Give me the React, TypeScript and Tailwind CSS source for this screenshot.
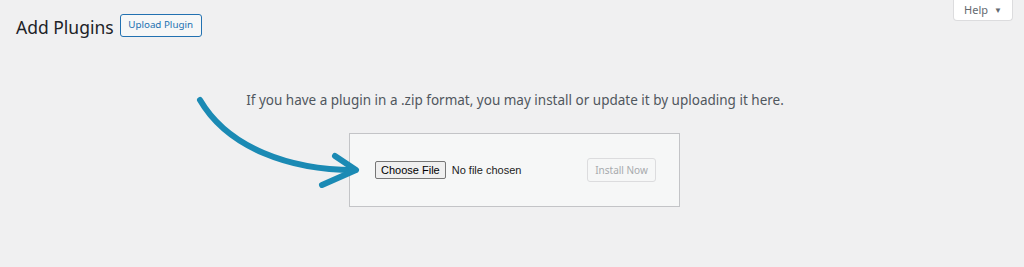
import React from "react";

export default function App() {
  return (
    <div className="relative w-full h-[267px] bg-[#f0f0f1] overflow-hidden" style={{ fontFamily: '"Noto Sans", "Open Sans", sans-serif' }}>
      <div className="absolute top-0 right-[11px] flex items-center justify-center gap-[6px] w-[60px] h-[21px] bg-white border border-t-0 border-[#dcdcde] rounded-b-[4px] text-[11px] text-[#646970]">
        <span>Help</span>
        <span className="text-[8px] leading-none">▼</span>
      </div>

      <div className="flex items-start pt-[14px] pl-[16px] gap-[6px]">
        <h1 className="mt-[2px] text-[17.5px] leading-[23px] font-normal text-[#1d2327]">Add Plugins</h1>
        <button className="h-[23px] w-[82px] flex items-center justify-center border border-[#2271b1] rounded-[3px] bg-[#f6f7f7] text-[9.8px] text-[#2271b1]">Upload Plugin</button>
      </div>

      <p className="mt-[51px] pl-[6px] text-center text-[13.5px] leading-[20px] text-[#50575e]">
        If you have a plugin in a .zip format, you may install or update it by uploading it here.
      </p>

      <div className="mt-[23px] flex justify-center pl-[5px]">
        <div className="w-[331px] h-[74px] bg-[#f6f7f7] border border-[#c3c4c7] flex items-center justify-between pl-[25px] pr-[23px]">
          <div className="flex items-center gap-[6px] text-[11px]" style={{ fontFamily: '"Liberation Sans", Arial, sans-serif' }}>
            <span className="h-[18px] px-[5px] flex items-center border border-[#767676] rounded-[2px] bg-[#efefef] text-black">Choose File</span>
            <span className="text-[#222]">No file chosen</span>
          </div>
          <span className="h-[24px] w-[69px] flex items-center justify-center border border-[#dcdcde] rounded-[3px] bg-[#f6f7f7] text-[10px] text-[#a7aaad]">Install Now</span>
        </div>
      </div>

      <svg className="absolute left-0 top-0 pointer-events-none" width="1024" height="267" viewBox="0 0 1024 267">
        <path d="M200 100 C228 148 290 170 354 170" fill="none" stroke="#1b8ab4" strokeWidth="6" strokeLinecap="round" />
        <path d="M335 156 L356 170 L322 185" fill="none" stroke="#1b8ab4" strokeWidth="6" strokeLinecap="round" strokeLinejoin="round" />
      </svg>
    </div>
  );
}
